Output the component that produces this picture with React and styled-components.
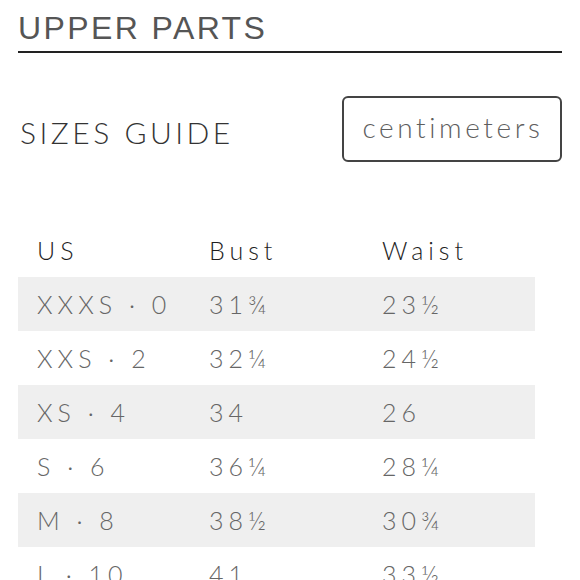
import React from "react";
import styled, { createGlobalStyle } from "styled-components";

const GlobalStyle = createGlobalStyle`
  html, body {
    margin: 0;
    padding: 0;
    background: #fff;
    overflow: hidden;
  }
  body {
    font-family: Lato, "Liberation Sans", sans-serif;
  }
`;

const Page = styled.div`
  padding: 0 18px;
  width: 544px;
`;

const Title = styled.h1`
  margin: 0;
  padding-top: 12px;
  padding-bottom: 7px;
  font-family: "Liberation Sans", Arial, sans-serif;
  font-weight: 400;
  font-size: 32px;
  line-height: 32px;
  letter-spacing: 2.4px;
  color: #555;
  border-bottom: 2px solid #222;
`;

const GuideRow = styled.div`
  display: flex;
  align-items: center;
  justify-content: space-between;
  margin-top: 43px;
`;

const GuideTitle = styled.h2`
  margin: 0;
  padding: 5px 0 0 2px;
  font-family: Lato, sans-serif;
  font-weight: 300;
  font-size: 30px;
  letter-spacing: 3.5px;
  color: #333;
`;

const UnitButton = styled.button`
  width: 220px;
  height: 66px;
  border: 2px solid #444;
  border-radius: 6px;
  background: #fff;
  font-family: Lato, sans-serif;
  font-weight: 300;
  font-size: 28px;
  letter-spacing: 3.6px;
  color: #5e5e5e;
  padding: 0 0 4px 2px;
`;

const Table = styled.div`
  margin-top: 61px;
  width: 517px;
`;

const Row = styled.div`
  display: grid;
  grid-template-columns: 172px 173px 1fr;
  align-items: center;
  height: 54px;
  padding-left: 19px;
  background: ${(p) => (p.$shaded ? "#efefef" : "transparent")};
`;

const Cell = styled.div`
  font-family: Lato, sans-serif;
  font-weight: 300;
  font-size: 25px;
  letter-spacing: 5px;
  color: ${(p) => (p.$head ? "#1e1e1e" : "#666")};
`;

const sizes = [
  ["XXXS · 0", "31¾", "23½"],
  ["XXS · 2", "32¼", "24½"],
  ["XS · 4", "34", "26"],
  ["S · 6", "36¼", "28¼"],
  ["M · 8", "38½", "30¾"],
  ["L · 10", "41", "33½"],
];

export default function App() {
  return (
    <>
      <GlobalStyle />
      <Page>
        <Title>UPPER PARTS</Title>
        <GuideRow>
          <GuideTitle>SIZES GUIDE</GuideTitle>
          <UnitButton>centimeters</UnitButton>
        </GuideRow>
        <Table>
          <Row>
            <Cell $head>US</Cell>
            <Cell $head>Bust</Cell>
            <Cell $head>Waist</Cell>
          </Row>
          {sizes.map((s, i) => (
            <Row key={s[0]} $shaded={i % 2 === 0}>
              <Cell>{s[0]}</Cell>
              <Cell>{s[1]}</Cell>
              <Cell>{s[2]}</Cell>
            </Row>
          ))}
        </Table>
      </Page>
    </>
  );
}
